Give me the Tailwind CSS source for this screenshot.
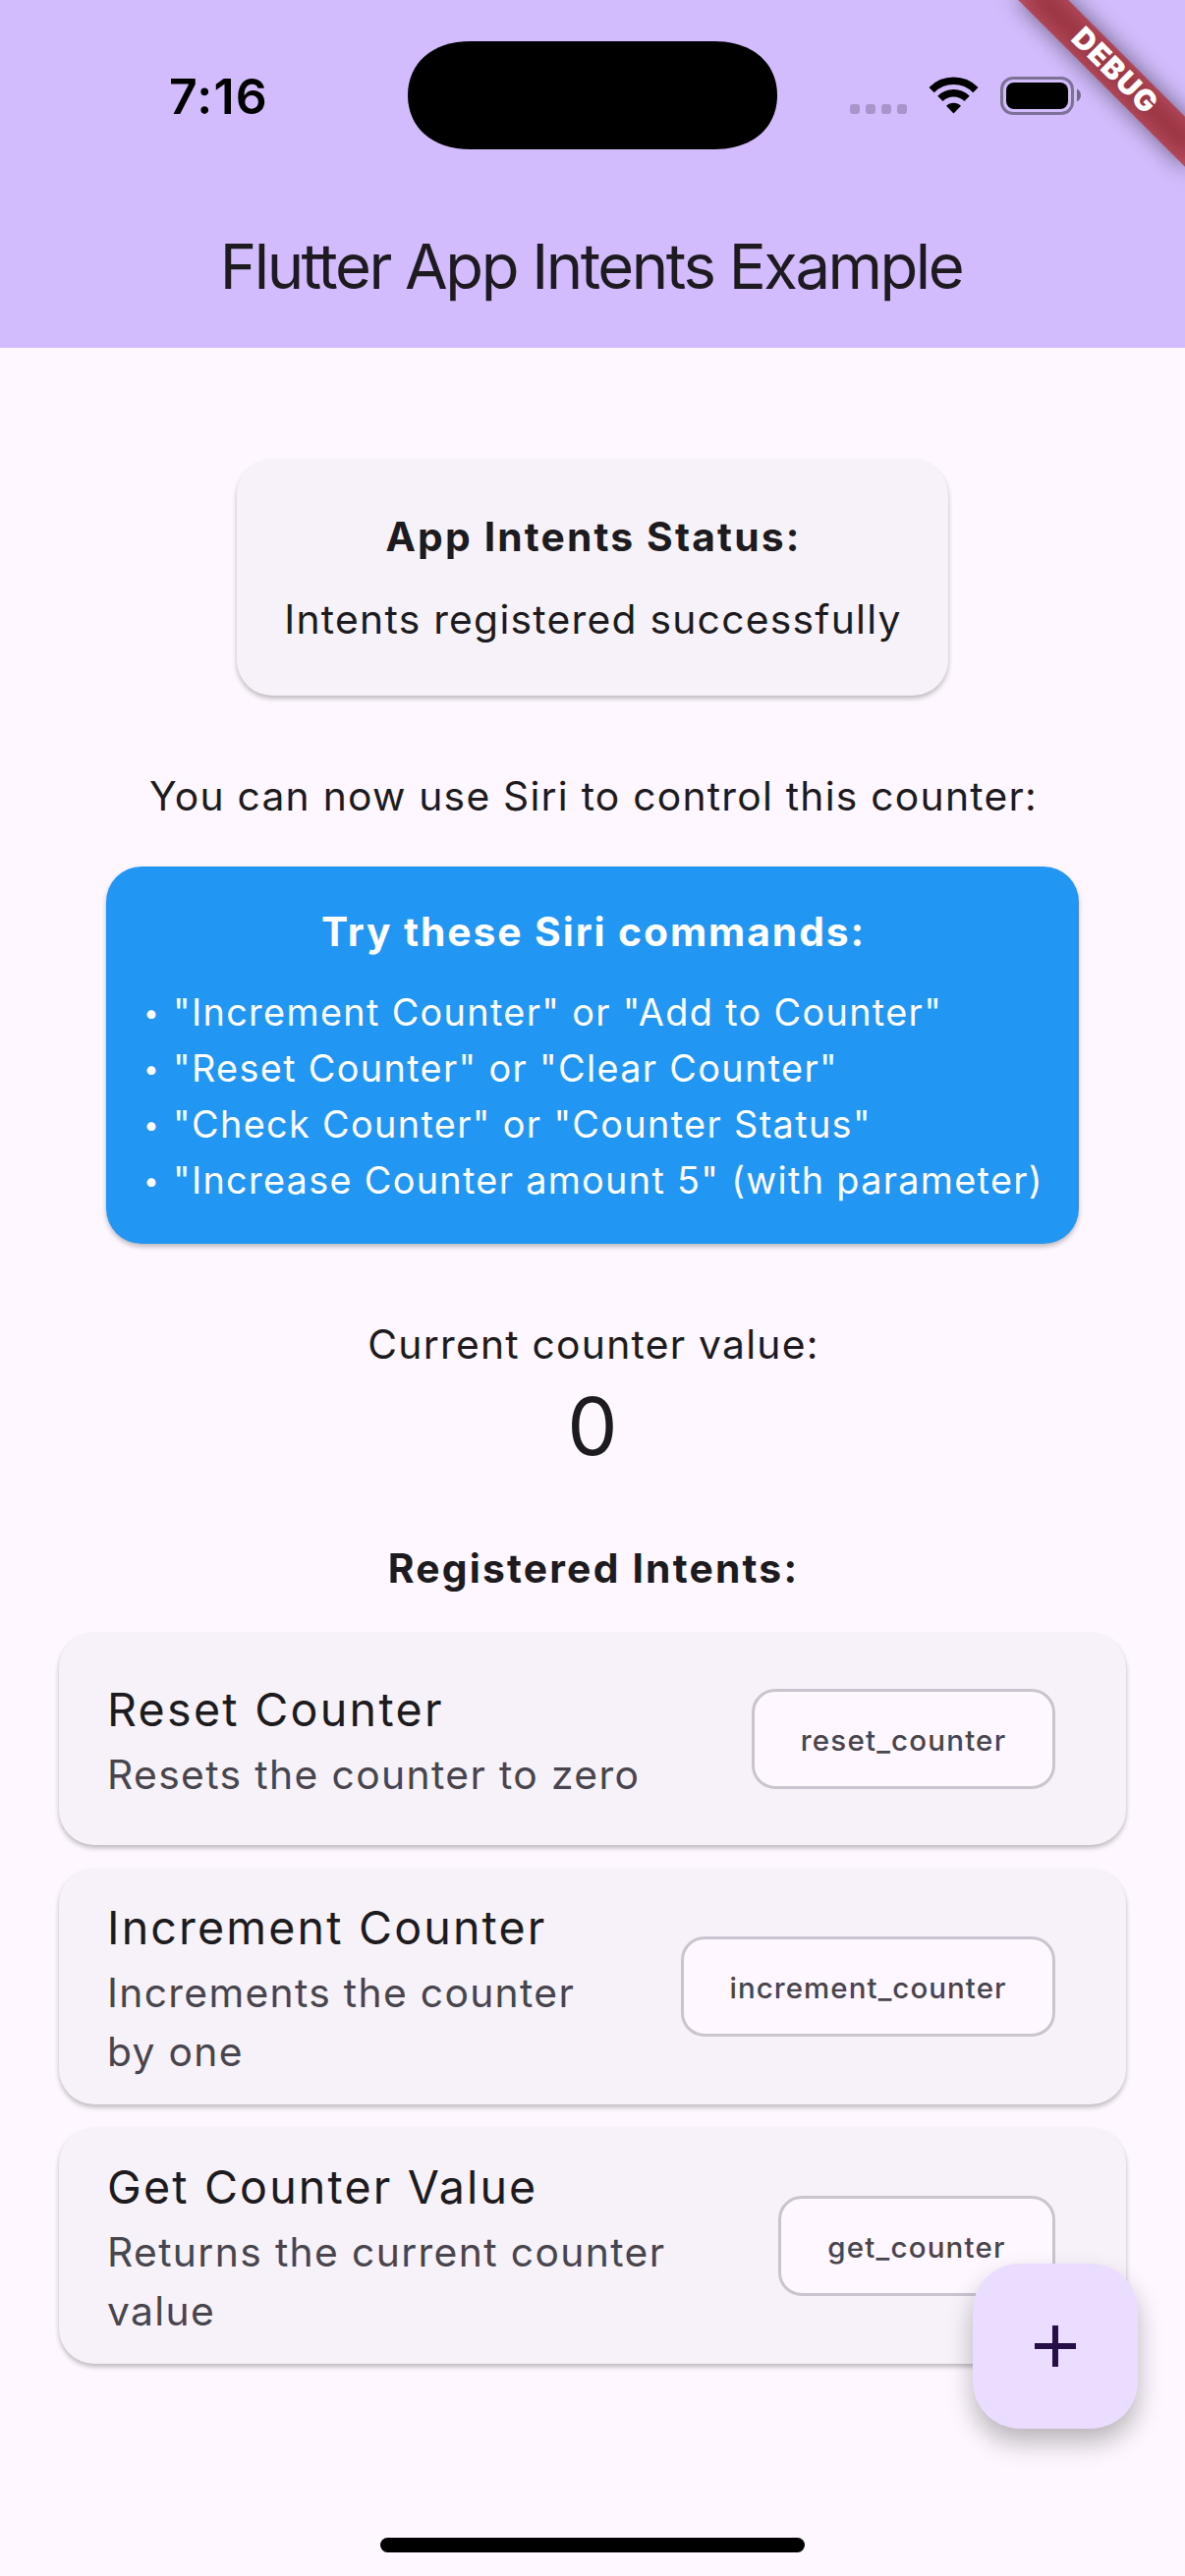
<!DOCTYPE html>
<html lang="en">
<head>
<meta charset="utf-8">
<title>Flutter App Intents Example</title>
<script src="https://cdn.jsdelivr.net/npm/@tailwindcss/browser@4"></script>
</head>
<body class="relative flex h-[2622px] w-[1206px] flex-col overflow-hidden bg-[#fef7ff] font-[Inter,sans-serif] text-[#1d1b20] whitespace-nowrap">

  <header class="flex h-[354px] w-full shrink-0 flex-col bg-[#d2bcfd]">
    <!-- Status bar -->
    <div class="flex h-[186px] items-center pt-2 pl-[172px] text-black">
      <div class="w-[243px] pt-0.5 text-[50px] leading-[60px] font-semibold tracking-[1.2px]">7:16</div>
      <svg class="h-[110px] w-[376px] shrink-0" viewBox="0 0 376 110"><path d="M64 0H312C352 0 376 23 376 55S352 110 312 110H64C24 110 0 87 0 55S24 0 64 0Z"/></svg>
      <div class="ml-[74px] flex items-center">
        <div class="mt-7 flex gap-1.5">
          <span class="size-2.5 rounded-[3px] bg-black/20"></span>
          <span class="size-2.5 rounded-[3px] bg-black/20"></span>
          <span class="size-2.5 rounded-[3px] bg-black/20"></span>
          <span class="size-2.5 rounded-[3px] bg-black/20"></span>
        </div>
        <svg class="ml-[22px] h-[38px] w-[51px]" viewBox="945 78.5 51 38" fill="none" stroke="#000" stroke-width="7.5">
          <path d="M948.1 92.1A31.7 31.7 0 0 1 992.9 92.1"/>
          <path d="M956.9 100.9A19.2 19.2 0 0 1 984.1 100.9"/>
          <path d="M970.5 116L963 108.3A10.6 10.6 0 0 1 978 108.3Z" fill="#000" stroke="none"/>
        </svg>
        <svg class="ml-[22px] h-[39px] w-[83px]" viewBox="0 0 83 39">
          <rect x="1.5" y="1.5" width="72" height="36" rx="11.5" fill="none" stroke="#000" stroke-opacity=".4" stroke-width="3"/>
          <rect x="6" y="6" width="63" height="27" rx="8"/>
          <path d="M78 12.5C80.7 13.8 82 16.5 82 19S80.7 24.2 78 25.5Z" fill-opacity=".45"/>
        </svg>
      </div>
    </div>
    <!-- App bar -->
    <h1 class="flex h-[168px] items-center justify-center pt-0.5 pr-[3px] text-[63.4px] leading-[84px] tracking-[-2.5px]">Flutter App Intents Example</h1>
  </header>

  <main class="flex flex-col items-center">
    <section class="mt-[114px] flex h-[240px] w-[724px] flex-col items-center gap-6 rounded-[36px] bg-[#f7f2f9] py-12 text-[40.8px] leading-[60px] shadow-[0_3px_5px_rgba(0,0,0,.26)]">
      <h2 class="pl-0.5 font-bold tracking-[2.15px]">App Intents Status:</h2>
      <p class="pl-px tracking-[1.25px]">Intents registered successfully</p>
    </section>

    <p class="mt-[72px] pl-0.5 text-[40.8px] leading-[60px] tracking-[1.23px]">You can now use Siri to control this counter:</p>

    <section class="mt-[42px] flex h-[384px] w-[990px] flex-col gap-6 rounded-[36px] bg-[#2196f3] p-9 text-white shadow-[0_3px_5px_rgba(0,0,0,.26)]">
      <h2 class="pl-0.5 text-center text-[40.8px] leading-[60px] font-bold tracking-[1.92px]">Try these Siri commands:</h2>
      <ul class="text-[37.8px] leading-[57px]">
        <li class="flex tracking-[1.35px]"><span class="w-8 shrink-0 pt-px pl-0.5 text-[28px]">•</span>"Increment Counter" or "Add to Counter"</li>
        <li class="-mt-px flex tracking-[1.35px]"><span class="w-8 shrink-0 pt-px pl-0.5 text-[28px]">•</span>"Reset Counter" or "Clear Counter"</li>
        <li class="-mt-px flex tracking-[1.36px]"><span class="w-8 shrink-0 pt-px pl-0.5 text-[28px]">•</span>"Check Counter" or "Counter Status"</li>
        <li class="-mt-px flex tracking-[1.32px]"><span class="w-8 shrink-0 pt-px pl-0.5 text-[28px]">•</span>"Increase Counter amount 5" (with parameter)</li>
      </ul>
    </section>

    <p class="mt-[72px] pl-0.5 text-[40.8px] leading-[60px] tracking-[1.24px]">Current counter value:</p>
    <p class="text-[81.5px] leading-[108px]">0</p>
    <h2 class="mt-[60px] pl-0.5 text-[40.8px] leading-[60px] font-bold tracking-[2.2px]">Registered Intents:</h2>

    <div class="mt-9 flex w-[1086px] flex-col gap-6">
      <article class="flex h-[216px] items-center justify-between rounded-[36px] bg-[#f7f2f9] pr-[72px] pl-[49px] shadow-[0_3px_5px_rgba(0,0,0,.26)]">
        <div>
          <h3 class="pt-px text-[46.6px] leading-[71px] tracking-[2.28px]">Reset Counter</h3>
          <p class="text-[40.8px] leading-[60px] tracking-[1.37px] text-[#49454f]">Resets the counter to zero</p>
        </div>
        <span class="flex h-[102px] w-[309px] items-center justify-center rounded-3xl border-3 border-[#cac4d0] bg-[#fef7ff] pt-0.5 text-[29.5px] font-[450] tracking-[1.2px] text-[#49454f]">reset_counter</span>
      </article>
      <article class="flex h-[240px] items-center justify-between rounded-[36px] bg-[#f7f2f9] pr-[72px] pl-[49px] shadow-[0_3px_5px_rgba(0,0,0,.26)]">
        <div>
          <h3 class="pt-px text-[46.6px] leading-[71px] tracking-[2.15px]">Increment Counter</h3>
          <p class="text-[40.8px] leading-[60px] tracking-[1.31px] text-[#49454f]">Increments the counter<br>by one</p>
        </div>
        <span class="flex h-[102px] w-[381px] items-center justify-center rounded-3xl border-3 border-[#cac4d0] bg-[#fef7ff] pt-0.5 text-[29.5px] font-[450] tracking-[1.05px] text-[#49454f]">increment_counter</span>
      </article>
      <article class="flex h-[240px] items-center justify-between rounded-[36px] bg-[#f7f2f9] pr-[72px] pl-[49px] shadow-[0_3px_5px_rgba(0,0,0,.26)]">
        <div>
          <h3 class="pt-px text-[46.6px] leading-[71px] tracking-[2.15px]">Get Counter Value</h3>
          <p class="text-[40.8px] leading-[60px] tracking-[1.36px] text-[#49454f]">Returns the current counter<br>value</p>
        </div>
        <span class="flex h-[102px] w-[282px] items-center justify-center rounded-3xl border-3 border-[#cac4d0] bg-[#fef7ff] pt-0.5 text-[29.5px] font-[450] tracking-[1.2px] text-[#49454f]">get_counter</span>
      </article>
    </div>
  </main>

  <!-- Floating action button -->
  <button class="absolute right-12 bottom-[150px] flex size-[168px] items-center justify-center rounded-[48px] bg-[#eaddff] shadow-[0_14px_26px_rgba(0,0,0,.27)]" aria-label="Increment">
    <svg class="size-[42px]" viewBox="0 0 42 42" fill="#260f47"><path d="M18 0h6v18h18v6H24v18h-6V24H0v-6h18z"/></svg>
  </button>

  <!-- Home indicator -->
  <div class="absolute bottom-6 left-[387px] h-[15px] w-[432px] rounded-full bg-black"></div>

  <!-- Debug ribbon -->
  <svg class="absolute top-0 right-0 size-[240px]" viewBox="-240 0 240 240">
    <defs><filter id="soft" x="-50%" y="-200%" width="200%" height="500%"><feGaussianBlur stdDeviation="11.9"/></filter></defs>
    <g transform="rotate(45)">
      <rect x="-120" y="84" width="240" height="36" fill="#000" fill-opacity=".5" filter="url(#soft)"/>
      <rect x="-130" y="84" width="260" height="36" fill="#b71c1c" fill-opacity=".63"/>
      <text x="0.5" y="111.5" text-anchor="middle" class="fill-white text-[30px] font-black tracking-[1px]">DEBUG</text>
    </g>
  </svg>
</body>
</html>
